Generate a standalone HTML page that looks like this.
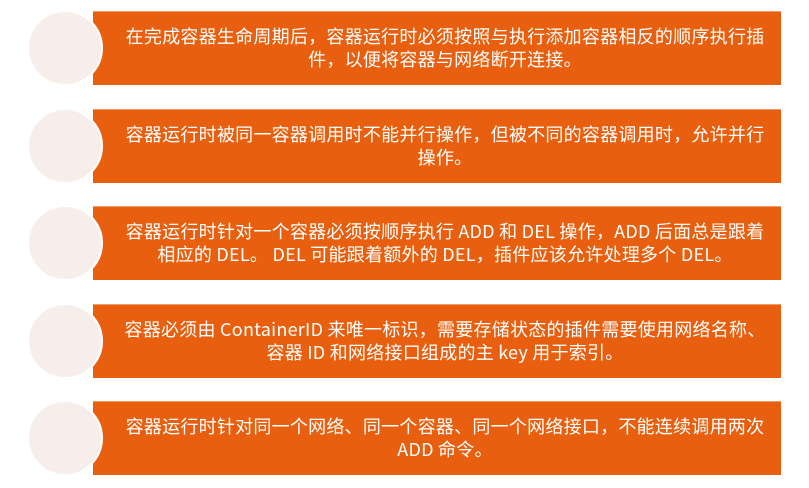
<!DOCTYPE html>
<html><head><meta charset="utf-8"><style>
body{margin:0;width:809px;height:488px;background:#fff;position:relative;overflow:hidden;font-family:"Noto Sans CJK SC",sans-serif}
.b{position:absolute;left:93px;width:688px;height:73px;background:#E8600F;border-top:1px solid #f09a66}
.t{position:absolute;left:110px;width:670px;color:#fff;font-size:18px;letter-spacing:0.25px;line-height:23px;text-align:center;display:flex;align-items:center;justify-content:center;height:73px;white-space:nowrap}
.t span{display:block}
.c{position:absolute;left:27px;width:72px;height:72px;border-radius:50%;background:#F7EEEC;border:2px solid #fff}
</style></head><body>
<div class="b" style="top:11px"></div><div class="c" style="top:10px"></div><div class="t" style="top:11px"><span>在完成容器生命周期后，容器运行时必须按照与执行添加容器相反的顺序执行插<br>件，以便将容器与网络断开连接。</span></div>
<div class="b" style="top:109px"></div><div class="c" style="top:108px"></div><div class="t" style="top:109px"><span>容器运行时被同一容器调用时不能并行操作，但被不同的容器调用时，允许并行<br>操作。</span></div>
<div class="b" style="top:206px"></div><div class="c" style="top:205px"></div><div class="t" style="top:206px"><span>容器运行时针对一个容器必须按顺序执行 ADD 和 DEL 操作，ADD 后面总是跟着<br>相应的 DEL。 DEL 可能跟着额外的 DEL，插件应该允许处理多个 DEL。</span></div>
<div class="b" style="top:304px"></div><div class="c" style="top:303px"></div><div class="t" style="top:304px"><span>容器必须由 ContainerID 来唯一标识，需要存储状态的插件需要使用网络名称、<br>容器 ID 和网络接口组成的主 key 用于索引。</span></div>
<div class="b" style="top:401px"></div><div class="c" style="top:400px"></div><div class="t" style="top:401px"><span>容器运行时针对同一个网络、同一个容器、同一个网络接口，不能连续调用两次<br>ADD 命令。</span></div>
</body></html>
